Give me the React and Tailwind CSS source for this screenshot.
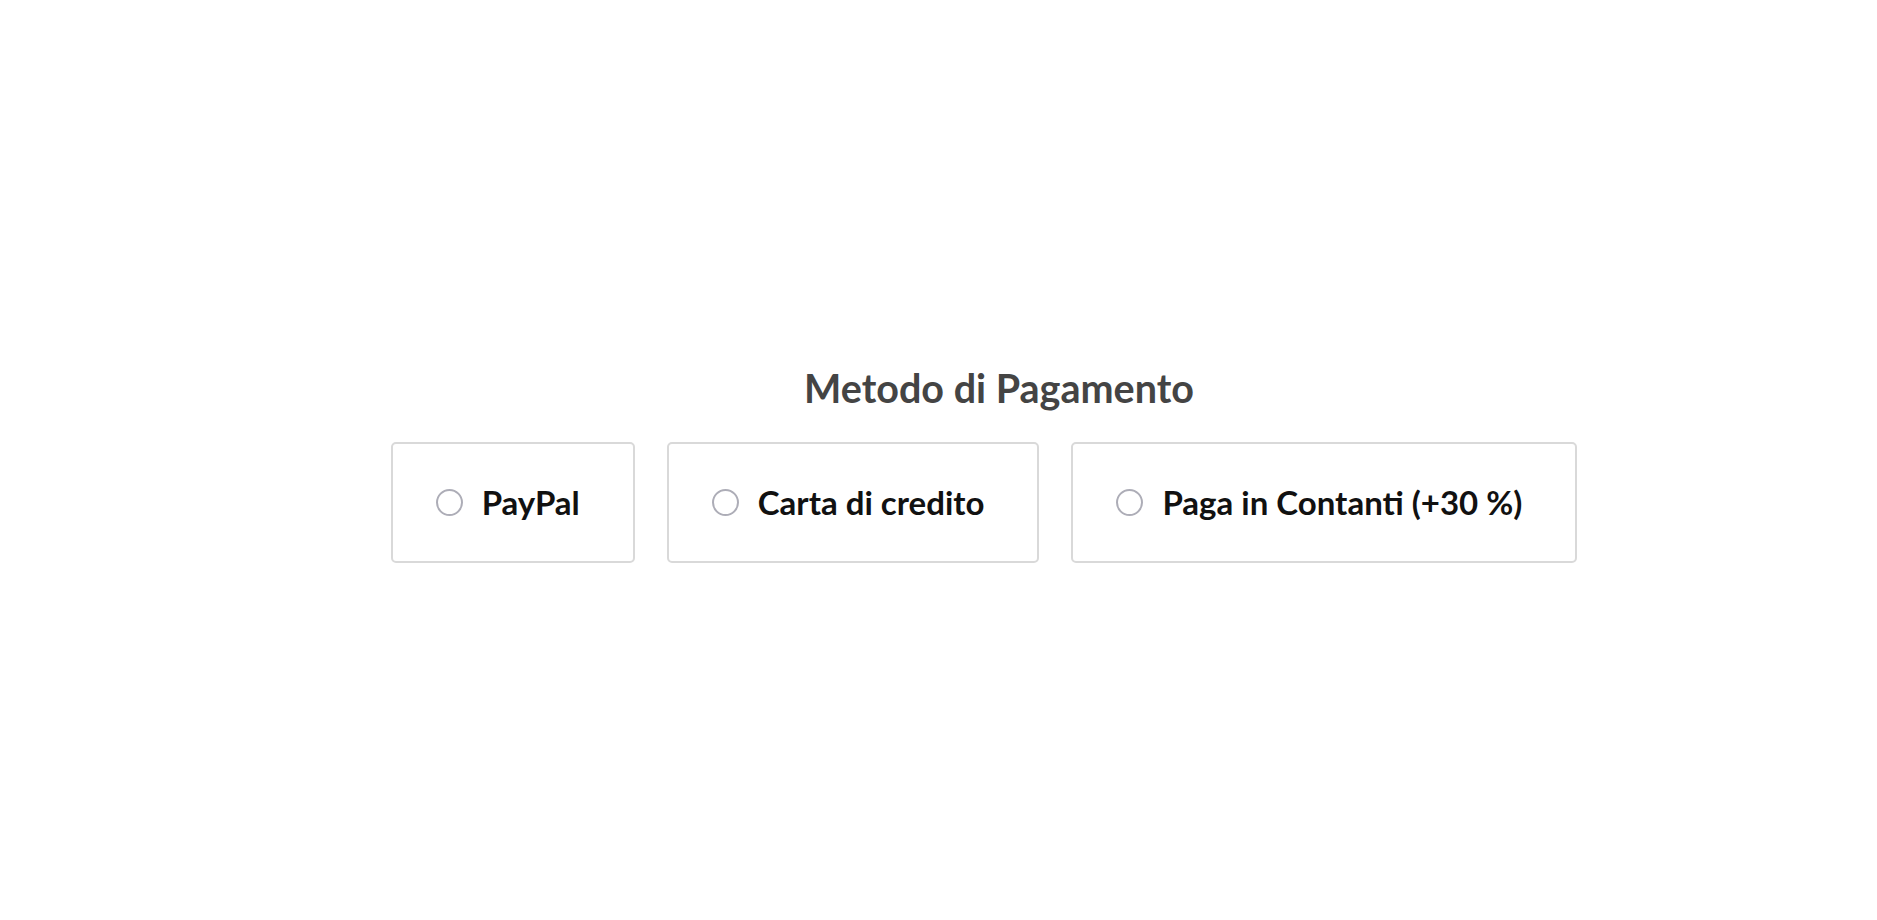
export default function App() {
  const options = ["PayPal", "Carta di credito", "Paga in Contanti (+30 %)"];
  return (
    <div className="w-full h-[920px] bg-white flex flex-col items-center pt-[363px] pl-[91px]" style={{ fontFamily: "Lato, 'Open Sans', sans-serif" }}>
      <h2 className="text-[39.5px] leading-[50px] font-bold text-[#444444] pl-[30px]">Metodo di Pagamento</h2>
      <div className="flex gap-[32px] mt-[29px]">
        {options.map((o) => (
          <label key={o} className="h-[121px] flex items-center pl-[43px] pr-[53px] border-2 border-[#d9d9d9] rounded-[5px] bg-white">
            <span className="w-[27px] h-[27px] rounded-full border-2 border-[#adadb7] bg-white shrink-0"></span>
            <span className="ml-[19px] text-[33px] font-bold text-[#111111] leading-none">{o}</span>
          </label>
        ))}
      </div>
    </div>
  );
}
